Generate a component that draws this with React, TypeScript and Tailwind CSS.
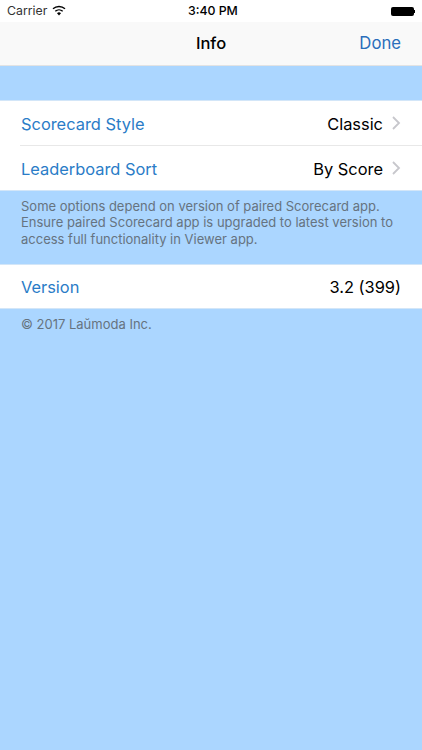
function Row({ label, value, chevron = false }: { label: string; value: string; chevron?: boolean }) {
    return (
        <div className="flex h-[44px] items-center justify-between px-[21px] pt-[3px]">
            <span className="text-[16.4px] text-[#2a7cc7]">{label}</span>
            <div className="flex items-center">
                <span className="text-[16.4px] text-black">{value}</span>
                {chevron && (
                    <svg width="9" height="14" viewBox="0 0 9 14" fill="none" className="mb-[3px] ml-[9px]">
                        <path d="M1 1l6 6-6 6" stroke="#c7c7cc" strokeWidth="1.8" />
                    </svg>
                )}
            </div>
        </div>
    );
}

export default function App() {
    return (
        <div className="flex h-[750px] w-[422px] flex-col overflow-hidden bg-[#abd6ff] font-['Inter',sans-serif]">
            {/* Status bar */}
            <div className="relative flex h-[22px] items-center bg-white px-[7px] text-[12.3px] text-[#333]">
                <span>Carrier</span>
                <svg width="14" height="11" viewBox="0 0 14 11" className="mb-[2px] ml-[5px]">
                    <path d="M7 10.5 5 8.2a3 3 0 0 1 4 0Z" fill="#000" />
                    <path d="M3.3 6.3a5.4 5.4 0 0 1 7.4 0M1 3.8a8.8 8.8 0 0 1 12 0" stroke="#000" strokeWidth="1.4" fill="none" />
                </svg>
                <span className="absolute left-[188px] font-medium text-black">3:40 PM</span>
                <div className="ml-auto flex items-center">
                    <div className="h-[9px] w-[23px] rounded-[2px] bg-black" />
                    <div className="h-[3px] w-[1px] bg-black" />
                </div>
            </div>

            {/* Nav bar */}
            <div className="relative flex h-[44px] items-center justify-end border-b border-[#e3e3e3] bg-[#f9f9f9] pr-[21px]">
                <span className="absolute left-0 right-0 text-center text-[16.5px] font-medium text-black">Info</span>
                <span className="relative text-[16.7px] text-[#2a6ebb]">Done</span>
            </div>

            <div className="h-[34px]" />

            <div className="border-y border-[#d3e6f8] bg-white">
                <Row label="Scorecard Style" value="Classic" chevron />
                <div className="ml-[20px] h-px bg-[#e8e8e8]" />
                <Row label="Leaderboard Sort" value="By Score" chevron />
            </div>

            <p className="whitespace-nowrap px-[21px] pt-[7px] text-[13px] leading-[16.3px] text-[#667380]">
                Some options depend on version of paired Scorecard app.
                <br />
                Ensure paired Scorecard app is upgraded to latest version to
                <br />
                access full functionality in Viewer app.
            </p>

            <div className="mt-[17px] border-y border-[#d3e6f8] bg-white">
                <div className="flex h-[43px] items-center justify-between px-[21px] pt-px">
                    <span className="text-[16.4px] text-[#2a7cc7]">Version</span>
                    <span className="text-[16.4px] text-black">3.2 (399)</span>
                </div>
            </div>

            <p className="px-[21px] pt-[7px] text-[13px] leading-[17px] text-[#667380]">© 2017 Laŭmoda Inc.</p>
        </div>
    );
}
